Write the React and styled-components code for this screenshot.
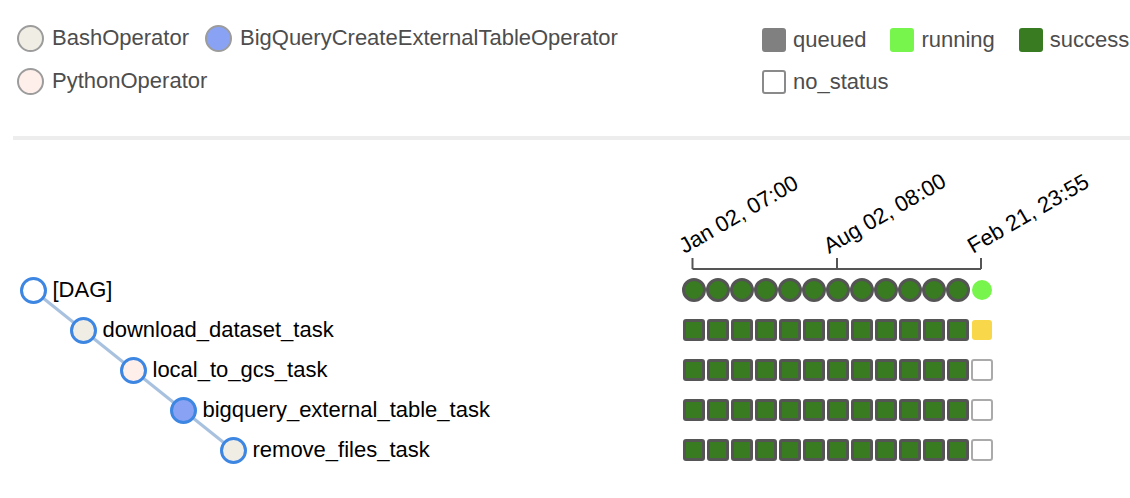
import styled, { createGlobalStyle } from 'styled-components'

const GlobalStyle = createGlobalStyle`
    body {
        margin: 0;
        background: #fff;
        font-family: "Liberation Sans", Arial, Helvetica, sans-serif;
    }
`

const OPERATORS = [
    { name: 'BashOperator', color: '#f0ede4' },
    { name: 'BigQueryCreateExternalTableOperator', color: '#89a2f4' },
    { name: 'PythonOperator', color: '#ffefeb' },
]

const STATES = [
    { name: 'queued', color: '#808080' },
    { name: 'running', color: '#78f54c' },
    { name: 'success', color: '#397b21' },
    { name: 'no_status', color: '#fff', border: '#8a8a8a' },
]

const TASKS = [
    { name: '[DAG]', depth: 0, fill: '#fff', last: 'running', round: true },
    { name: 'download_dataset_task', depth: 1, fill: '#f0ede4', last: 'yellow' },
    { name: 'local_to_gcs_task', depth: 2, fill: '#ffefeb', last: 'none' },
    { name: 'bigquery_external_table_task', depth: 3, fill: '#89a2f4', last: 'none' },
    { name: 'remove_files_task', depth: 4, fill: '#f0ede4', last: 'none' },
]

const RUNS = 12
const ROW_HEIGHT = 40
const INDENT = 50
const SLOT = 24

const LAST_COLORS = {
    running: '#78f54c',
    yellow: '#f9d74a',
}

const Page = styled.div`
    padding: 0 0 0 13px;
    width: 1117px;
`

const Legend = styled.div`
    display: flex;
    justify-content: space-between;
    padding-top: 24px;
    height: 71px;
`

const OperatorLegend = styled.div`
    display: flex;
    flex-wrap: wrap;
    align-content: flex-start;
    width: 620px;
    padding-left: 4px;
    column-gap: 16px;
    row-gap: 15px;
`

const StateLegend = styled.div`
    display: flex;
    flex-wrap: wrap;
    align-content: flex-start;
    column-gap: 24px;
    row-gap: 14px;
    width: 368px;
    margin-top: 2px;
`

const LegendItem = styled.div`
    display: flex;
    align-items: center;
    gap: 8px;
    height: 28px;
    font-size: 22px;
    color: #4d4d4d;
    white-space: nowrap;
`

const OperatorDot = styled.span`
    width: 27px;
    height: 27px;
    box-sizing: border-box;
    border-radius: 50%;
    border: 2px solid #9c9c9c;
    background: ${(p) => p.$color};
    flex: none;
`

const StateSwatch = styled.span`
    width: 24px;
    height: 24px;
    box-sizing: border-box;
    border-radius: 3px;
    background: ${(p) => p.$color};
    border: ${(p) => (p.$border ? `2px solid ${p.$border}` : 'none')};
    flex: none;
    margin-right: -1px;
`

const Divider = styled.div`
    height: 4px;
    background: #ededed;
    margin-top: 41px;
`

const Header = styled.div`
    display: flex;
    height: 130px;
    padding-left: 669px;
`

const AxisSvg = styled.svg`
    overflow: visible;
    display: block;
`

const Body = styled.div`
    position: relative;
`

const Links = styled.svg`
    position: absolute;
    left: 0;
    top: 0;
    z-index: 0;
    pointer-events: none;
`

const Row = styled.div`
    position: relative;
    z-index: 1;
    display: flex;
    align-items: center;
    height: ${ROW_HEIGHT}px;
`

const TaskLabel = styled.div`
    display: flex;
    align-items: center;
    width: 669px;
    box-sizing: border-box;
    padding-left: ${(p) => p.$depth * INDENT + 6.5}px;
    font-size: 22px;
    color: #000;
    white-space: nowrap;
`

const TaskNode = styled.span`
    width: 27px;
    height: 27px;
    box-sizing: border-box;
    border-radius: 50%;
    border: 3px solid #3d87e3;
    background: ${(p) => p.$fill};
    margin-right: 6px;
    flex: none;
`

const Cells = styled.div`
    display: flex;
`

const Slot = styled.div`
    width: ${SLOT}px;
    height: ${SLOT}px;
    display: flex;
    align-items: center;
    justify-content: center;
`

const RunDot = styled.span`
    width: 24px;
    height: 24px;
    box-sizing: border-box;
    border-radius: 50%;
    border: 3px solid #555;
    background: #397b21;
`

const LiveDot = styled.span`
    width: 20px;
    height: 20px;
    border-radius: 50%;
    background: ${(p) => p.$color};
`

const TaskSquare = styled.span`
    width: 22px;
    height: 22px;
    box-sizing: border-box;
    border-radius: 3px;
    border: 3px solid #555;
    background: #397b21;
`

const LastSquare = styled.span`
    width: ${(p) => (p.$color ? 20 : 22)}px;
    height: ${(p) => (p.$color ? 20 : 22)}px;
    box-sizing: border-box;
    border-radius: 3px;
    background: ${(p) => p.$color || '#fff'};
    border: ${(p) => (p.$color ? 'none' : '2px solid #aaa')};
`

const TICKS = [
    { x: 10.5, label: 'Jan 02, 07:00' },
    { x: 155, label: 'Aug 02, 08:00' },
    { x: 299, label: 'Feb 21, 23:55' },
]

function Axis() {
    return (
        <AxisSvg width={312} height={130}>
            <path
                d={`M${TICKS[0].x},129 H${TICKS[2].x}`}
                stroke="#555"
                strokeWidth="2"
                fill="none"
            />
            {TICKS.map((t) => (
                <g key={t.label}>
                    <line x1={t.x} x2={t.x} y1={118} y2={129} stroke="#555" strokeWidth="2" />
                    <text
                        transform={`translate(${t.x - 8}, 114) rotate(-30)`}
                        fontSize="22"
                        fill="#000"
                        fontFamily='"Liberation Sans", Arial, sans-serif'
                    >
                        {t.label}
                    </text>
                </g>
            ))}
        </AxisSvg>
    )
}

function TaskLinks() {
    const center = (i) => [20 + TASKS[i].depth * INDENT, ROW_HEIGHT / 2 + i * ROW_HEIGHT]
    return (
        <Links width={669} height={TASKS.length * ROW_HEIGHT}>
            {TASKS.slice(1).map((task, idx) => {
                const [x1, y1] = center(idx)
                const [x2, y2] = center(idx + 1)
                return (
                    <path
                        key={task.name}
                        d={`M${x1},${y1} L${x2},${y2}`}
                        stroke="#a7c1de"
                        strokeWidth="3"
                        fill="none"
                    />
                )
            })}
        </Links>
    )
}

function LastCell({ task }) {
    if (task.round) return <LiveDot $color={LAST_COLORS[task.last]} />
    return <LastSquare $color={LAST_COLORS[task.last]} />
}

export default function App() {
    return (
        <Page>
            <GlobalStyle />
            <Legend>
                <OperatorLegend>
                    {OPERATORS.map((op) => (
                        <LegendItem key={op.name}>
                            <OperatorDot $color={op.color} />
                            {op.name}
                        </LegendItem>
                    ))}
                </OperatorLegend>
                <StateLegend>
                    {STATES.map((s) => (
                        <LegendItem key={s.name}>
                            <StateSwatch $color={s.color} $border={s.border} />
                            {s.name}
                        </LegendItem>
                    ))}
                </StateLegend>
            </Legend>
            <Divider />
            <Header>
                <Axis />
            </Header>
            <Body>
                <TaskLinks />
                {TASKS.map((task) => (
                    <Row key={task.name}>
                        <TaskLabel $depth={task.depth}>
                            <TaskNode $fill={task.fill} />
                            {task.name}
                        </TaskLabel>
                        <Cells>
                            {Array.from({ length: RUNS }, (_, i) => (
                                <Slot key={i}>{task.round ? <RunDot /> : <TaskSquare />}</Slot>
                            ))}
                            <Slot>
                                <LastCell task={task} />
                            </Slot>
                        </Cells>
                    </Row>
                ))}
            </Body>
        </Page>
    )
}
